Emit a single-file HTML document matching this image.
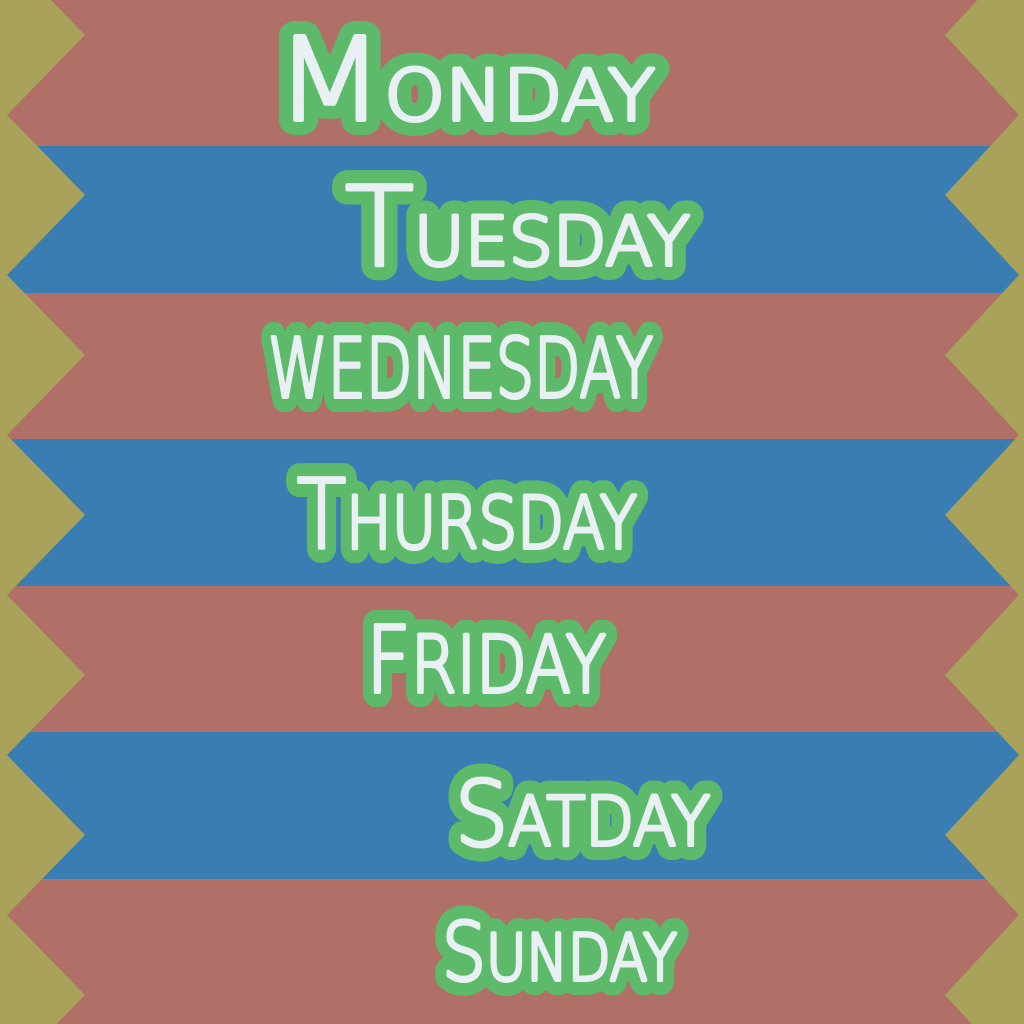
<!DOCTYPE html>
<html><head><meta charset="utf-8"><style>
html,body{margin:0;padding:0;width:1024px;height:1024px;overflow:hidden;background:#a8a25a}
svg{display:block}
text{font-family:"DejaVu Sans","Liberation Sans",sans-serif;font-weight:200}
.g{fill:#5cba6a;stroke:#5cba6a;stroke-width:30;stroke-linejoin:round;stroke-linecap:round}
.w{fill:#e8f0f4;stroke:#e8f0f4;stroke-width:4;stroke-linejoin:round}
</style></head><body>
<svg width="1024" height="1024" viewBox="0 0 1024 1024">
<rect x="0" y="0" width="1024" height="146" fill="#b07068"/>
<rect x="0" y="146" width="1024" height="147" fill="#3a7db2"/>
<rect x="0" y="293" width="1024" height="146" fill="#b07068"/>
<rect x="0" y="439" width="1024" height="147" fill="#3a7db2"/>
<rect x="0" y="586" width="1024" height="146" fill="#b07068"/>
<rect x="0" y="732" width="1024" height="147" fill="#3a7db2"/>
<rect x="0" y="879" width="1024" height="145" fill="#b07068"/>
<polygon fill="#a8a25a" points="0,-45 7,-45 85,35 7,115 85,195 7,275 85,355 7,435 85,515 7,595 85,675 7,755 85,835 7,915 85,995 7,1075 0,1075"/>
<polygon fill="#a8a25a" points="1024,-45 1019,-45 945,35 1019,115 945,195 1019,275 945,355 1019,435 945,515 1019,595 945,675 1019,755 945,835 1019,915 945,995 1019,1075 1024,1075"/>
<g>
<text class="g" x="275" y="120" font-size="70" textLength="380" lengthAdjust="spacingAndGlyphs"><tspan font-size="115">M</tspan>ONDAY</text>
<text class="w" x="275" y="120" font-size="70" textLength="380" lengthAdjust="spacingAndGlyphs"><tspan font-size="115">M</tspan>ONDAY</text>
<text class="g" x="345" y="265" font-size="68" textLength="345" lengthAdjust="spacingAndGlyphs"><tspan font-size="110">T</tspan>UESDAY</text>
<text class="w" x="345" y="265" font-size="68" textLength="345" lengthAdjust="spacingAndGlyphs"><tspan font-size="110">T</tspan>UESDAY</text>
<text class="g" x="268" y="397" font-size="82" textLength="385" lengthAdjust="spacingAndGlyphs">WEDNESDAY</text>
<text class="w" x="268" y="397" font-size="82" textLength="385" lengthAdjust="spacingAndGlyphs">WEDNESDAY</text>
<text class="g" x="297" y="548" font-size="72" textLength="340" lengthAdjust="spacingAndGlyphs"><tspan font-size="95">T</tspan>HURSDAY</text>
<text class="w" x="297" y="548" font-size="72" textLength="340" lengthAdjust="spacingAndGlyphs"><tspan font-size="95">T</tspan>HURSDAY</text>
<text class="g" x="366" y="692" font-size="78" textLength="240" lengthAdjust="spacingAndGlyphs"><tspan font-size="92">F</tspan>RIDAY</text>
<text class="w" x="366" y="692" font-size="78" textLength="240" lengthAdjust="spacingAndGlyphs"><tspan font-size="92">F</tspan>RIDAY</text>
<text class="g" x="455" y="845" font-size="68" textLength="255" lengthAdjust="spacingAndGlyphs"><tspan font-size="90">S</tspan>ATDAY</text>
<text class="w" x="455" y="845" font-size="68" textLength="255" lengthAdjust="spacingAndGlyphs"><tspan font-size="90">S</tspan>ATDAY</text>
<text class="g" x="442" y="980" font-size="64" textLength="235" lengthAdjust="spacingAndGlyphs"><tspan font-size="80">S</tspan>UNDAY</text>
<text class="w" x="442" y="980" font-size="64" textLength="235" lengthAdjust="spacingAndGlyphs"><tspan font-size="80">S</tspan>UNDAY</text>
</g>
</svg>
</body></html>
